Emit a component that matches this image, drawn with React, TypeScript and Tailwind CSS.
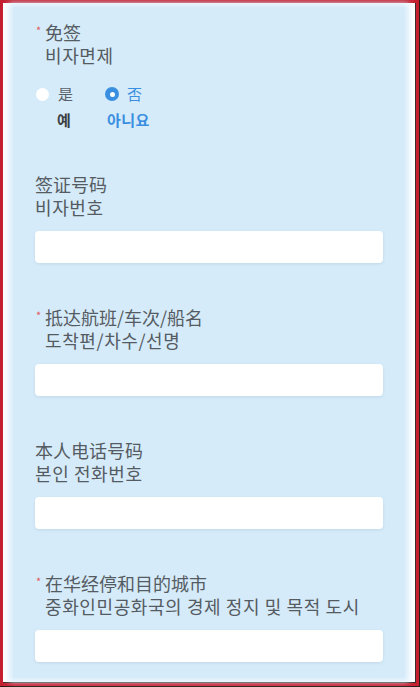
const cjk = "font-['Noto_Sans_CJK_SC','Noto_Sans_CJK_KR',sans-serif]";

function Label({
  zh,
  ko,
  required,
}: {
  zh: string;
  ko: string;
  required?: boolean;
}) {
  return (
    <div className={`text-[18px] leading-[23px] text-[#555b62] ${cjk}`}>
      <div className="flex">
        {required ? (
          <span className="w-[10px] shrink-0 pt-[1px] pl-[1px] text-[11px] leading-[16px] text-[#e05a62]">
            *
          </span>
        ) : null}
        <span>{zh}</span>
      </div>
      <div
        className={`tracking-[0.6px] ${cjk} ${required ? "pl-[10px]" : ""}`}
      >
        {ko}
      </div>
    </div>
  );
}

function Field({
  zh,
  ko,
  required,
}: {
  zh: string;
  ko: string;
  required?: boolean;
}) {
  return (
    <div className="mt-[43px]">
      <Label zh={zh} ko={ko} required={required} />
      <div className="mt-[12px] h-[32px] rounded-[4px] bg-white shadow-[0_1px_3px_rgba(60,90,120,0.12)]" />
    </div>
  );
}

export default function App() {
  return (
    <div className="h-[687px] w-[420px] overflow-hidden bg-[#2a1a1a] pr-[1px] pb-[1px]">
      <div className="h-full w-full border-[3px] border-[#c52030] bg-white">
        <div className="flex h-full border-r border-b border-[#3a2a2a] pl-[10px] pr-[6px] pt-[4px] pb-[4px]">
          <div className="h-full w-[392px] bg-[#d5ebf9] px-[22px] pt-[14px] shadow-[0_0_6px_4px_rgba(213,235,249,0.9)]">
            <Label zh="免签" ko="비자면제" required />

            <div className={`mt-[14px] text-[15px] ${cjk}`}>
              <div className="flex h-[26px] items-center">
                <div className="flex w-[70px] items-center pl-[1px]">
                  <span className="h-[13px] w-[13px] rounded-full bg-white" />
                  <span className="ml-[9px] text-[#5b6168]">是</span>
                </div>
                <div className="flex items-center">
                  <span className="flex h-[14px] w-[14px] items-center justify-center rounded-full bg-[#3b8fe0]">
                    <span className="h-[5px] w-[5px] rounded-full bg-white" />
                  </span>
                  <span className="ml-[8px] text-[#3b8fe0]">否</span>
                </div>
              </div>
              <div className="flex h-[26px] items-center">
                <span className="w-[72px] pl-[22px] font-bold text-[#3a3f45]">
                  예
                </span>
                <span className="font-bold tracking-[0.5px] text-[#3b8fe0]">
                  아니요
                </span>
              </div>
            </div>

            <div className="mt-[-3px]">
              <Field zh="签证号码" ko="비자번호" />
            </div>
            <Field zh="抵达航班/车次/船名" ko="도착편/차수/선명" required />
            <Field zh="本人电话号码" ko="본인 전화번호" />
            <Field
              zh="在华经停和目的城市"
              ko="중화인민공화국의 경제 정지 및 목적 도시"
              required
            />
          </div>
        </div>
      </div>
    </div>
  );
}
